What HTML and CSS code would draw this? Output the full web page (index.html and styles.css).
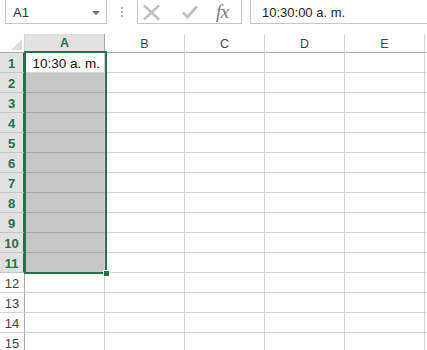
FILE: index.html
```html
<!DOCTYPE html>
<html>
	<head>
		<meta charset="utf-8">
		<title>Hoja1</title>
		<link rel="stylesheet" href="styles.css">
	</head>
	<body>
		<div class="fbar">
			<div class="namebox">
				<span>A1</span>
				<i class="caret"></i>
			</div>
			<div class="dots"><b></b><b></b><b></b></div>
			<div class="tools">
				<svg class="ico" width="19" height="17" viewBox="0 0 19 17">
					<path d="M2 1.5 L17 15.5 M17 1.5 L2 15.5" stroke="#c0c0c0" stroke-width="2.4" fill="none"/>
				</svg>
				<svg class="ico ok" width="16" height="14" viewBox="0 0 16 14">
					<path d="M1 7.5 L5.5 12 L15 1.5" stroke="#c0c0c0" stroke-width="2.8" fill="none"/>
				</svg>
				<span class="fx">fx</span>
			</div>
			<div class="formula">10:30:00 a. m.</div>
		</div>

		<div class="sheet">
			<div class="grid">
				<div class="corner"><i></i></div>
				<div class="ch on">A</div>
				<div class="ch">B</div>
				<div class="ch">C</div>
				<div class="ch">D</div>
				<div class="ch">E</div>
				<div class="ch end"></div>

				<div class="rh on">1</div><div class="c val">10:30 a. m.</div><div class="c"></div><div class="c"></div><div class="c"></div><div class="c"></div><div class="c end"></div>
				<div class="rh on">2</div><div class="c fill"></div><div class="c"></div><div class="c"></div><div class="c"></div><div class="c"></div><div class="c end"></div>
				<div class="rh on">3</div><div class="c fill"></div><div class="c"></div><div class="c"></div><div class="c"></div><div class="c"></div><div class="c end"></div>
				<div class="rh on">4</div><div class="c fill"></div><div class="c"></div><div class="c"></div><div class="c"></div><div class="c"></div><div class="c end"></div>
				<div class="rh on">5</div><div class="c fill"></div><div class="c"></div><div class="c"></div><div class="c"></div><div class="c"></div><div class="c end"></div>
				<div class="rh on">6</div><div class="c fill"></div><div class="c"></div><div class="c"></div><div class="c"></div><div class="c"></div><div class="c end"></div>
				<div class="rh on">7</div><div class="c fill"></div><div class="c"></div><div class="c"></div><div class="c"></div><div class="c"></div><div class="c end"></div>
				<div class="rh on">8</div><div class="c fill"></div><div class="c"></div><div class="c"></div><div class="c"></div><div class="c"></div><div class="c end"></div>
				<div class="rh on">9</div><div class="c fill"></div><div class="c"></div><div class="c"></div><div class="c"></div><div class="c"></div><div class="c end"></div>
				<div class="rh on">10</div><div class="c fill"></div><div class="c"></div><div class="c"></div><div class="c"></div><div class="c"></div><div class="c end"></div>
				<div class="rh on">11</div><div class="c fill"></div><div class="c"></div><div class="c"></div><div class="c"></div><div class="c"></div><div class="c end"></div>
				<div class="rh">12</div><div class="c"></div><div class="c"></div><div class="c"></div><div class="c"></div><div class="c"></div><div class="c end"></div>
				<div class="rh">13</div><div class="c"></div><div class="c"></div><div class="c"></div><div class="c"></div><div class="c"></div><div class="c end"></div>
				<div class="rh">14</div><div class="c"></div><div class="c"></div><div class="c"></div><div class="c"></div><div class="c"></div><div class="c end"></div>
				<div class="rh">15</div><div class="c"></div><div class="c"></div><div class="c"></div><div class="c"></div><div class="c"></div><div class="c end"></div>
			</div>
			<!-- seleccion A1:A11 -->
			<div class="selection"><i class="handle"></i></div>
		</div>
	</body>
</html>
```

FILE: styles.css
```css
*{
	box-sizing: border-box;
}
html, body{
	margin: 0;
	padding: 0;
	background: #fff;
	overflow: hidden;
}
body{
	width: 427px;
	height: 350px;
	font-family: "Liberation Sans", Arial, sans-serif;
	color: #222;
}

/* barra de formulas */
.fbar{
	display: flex;
	align-items: stretch;
	height: 25px;
	margin-top: -1px;
}
.namebox{
	width: 102px;
	margin-left: 5px;
	border: 1px solid #c6c6c6;
	display: flex;
	align-items: center;
	justify-content: space-between;
	padding: 1px 6px 0 7px;
	font-size: 13px;
	color: #333;
}
.caret{
	width: 0;
	height: 0;
	border-left: 4px solid transparent;
	border-right: 4px solid transparent;
	border-top: 4px solid #6d6d6d;
	margin-top: 1px;
}
.dots{
	width: 30px;
	display: flex;
	flex-direction: column;
	align-items: center;
	justify-content: center;
	gap: 2px;
	padding-top: 1px;
}
.dots b{
	width: 2px;
	height: 2px;
	background: #b4b4b4;
}
.tools{
	width: 105px;
	border: 1px solid #c6c6c6;
	display: flex;
	align-items: center;
	padding-left: 4px;
}
.ico{
	display: block;
	margin-top: 1px;
}
.ok{
	margin-left: 21px;
}
.fx{
	margin-left: 18px;
	font-family: "Liberation Serif", "Times New Roman", serif;
	font-style: italic;
	font-size: 19px;
	color: #7a7a7a;
	letter-spacing: -0.5px;
	line-height: 20px;
}
.formula{
	flex: 1;
	margin-left: 8px;
	border: 1px solid #c6c6c6;
	border-right: none;
	display: flex;
	align-items: center;
	padding: 1px 0 0 11px;
	font-size: 13px;
	color: #222;
}

/* hoja */
.sheet{
	position: relative;
	margin-top: 10px;
}
.grid{
	display: grid;
	grid-template-columns: 25px repeat(5, 80px) 1fr;
	grid-template-rows: 19px;
	grid-auto-rows: 20px;
}
.corner{
	border-right: 1px solid #d4d4d4;
	border-bottom: 1px solid #ababab;
	position: relative;
}
.corner i{
	position: absolute;
	right: 2px;
	bottom: 2px;
	width: 0;
	height: 0;
	border-left: 11px solid transparent;
	border-bottom: 11px solid #dfdfdf;
}
.ch{
	border-right: 1px solid #d4d4d4;
	border-bottom: 1px solid #ababab;
	font-size: 12.5px;
	color: #444;
	display: flex;
	align-items: center;
	justify-content: center;
	padding-top: 1px;
}
.ch.on{
	background: #e1e1e1;
	color: #217346;
	font-weight: bold;
	border-right-color: #ababab;
	border-bottom: 2px solid #217346;
}
.rh{
	border-right: 1px solid #ababab;
	border-bottom: 1px solid #d4d4d4;
	font-size: 13px;
	color: #444;
	display: flex;
	align-items: center;
	justify-content: center;
	padding-top: 1px;
}
.rh.on{
	background: #e1e1e1;
	color: #217346;
	font-weight: bold;
	border-bottom-color: #c4c4c4;
	border-right: 2px solid #217346;
}
.c{
	border-right: 1px solid #d4d4d4;
	border-bottom: 1px solid #d4d4d4;
}
.c.end, .ch.end{
	border-right: none;
}
.val{
	font-size: 13.5px;
	color: #111;
	text-align: right;
	padding: 3px 4px 0 0;
	white-space: nowrap;
}
.fill{
	background: #c6c6c6;
	border-bottom-color: #a8a8a8;
}

/* seleccion */
.selection{
	position: absolute;
	left: 24px;
	top: 17px;
	width: 83px;
	height: 223px;
	border: 2px solid #217346;
	pointer-events: none;
}
.handle{
	position: absolute;
	right: -5px;
	bottom: -5px;
	width: 7px;
	height: 7px;
	background: #217346;
	border: 1px solid #fff;
}
```
